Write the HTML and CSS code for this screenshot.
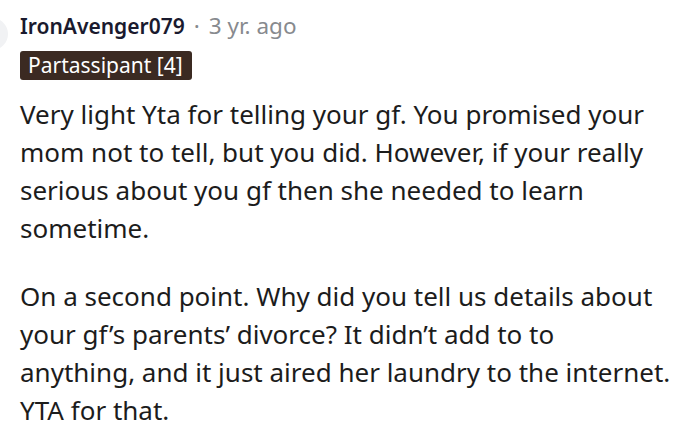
FILE: index.html
```html
<!DOCTYPE html>
<html>
<head>
<meta charset="utf-8">
<link rel="stylesheet" href="styles.css">
</head>
<body>
<div class="comment">
  <div class="avatar"></div>
  <div class="head">
    <span class="user">IronAvenger079</span>
    <span class="dot">·</span>
    <span class="time">3 yr. ago</span>
  </div>
  <div class="flair">Partassipant [4]</div>
  <div class="body">
    <p>Very light Yta for telling your gf. You promised your mom not to tell, but you did. However, if your really serious about you gf then she needed to learn sometime.</p>
    <p>On a second point. Why did you tell us details about your gf’s parents’ divorce? It didn’t add to to<br>anything, and it just aired her laundry to the internet. YTA for that.</p>
  </div>
</div>
</body>
</html>
```

FILE: styles.css
```css
html, body {
  margin: 0;
  padding: 0;
  background: #ffffff;
}
.comment {
  position: relative;
  padding: 12px 0 0 20px;
  font-family: "Noto Sans", sans-serif;
  width: 660px;
}
.avatar {
  position: absolute;
  left: -24px;
  top: 18px;
  width: 32px;
  height: 32px;
  border-radius: 50%;
  background: #f1f2f4;
}
.head {
  display: flex;
  align-items: baseline;
  gap: 9px;
  height: 28px;
  line-height: 28px;
}
.user {
  color: #1a1a2e;
  font-weight: 600;
  font-size: 21px;
}
.dot, .time {
  color: #878a8e;
  font-size: 22.5px;
}
.flair {
  display: inline-block;
  margin-top: 11px;
  background: #3b2a22;
  color: #ffffff;
  font-size: 21px;
  line-height: 29px;
  padding: 0 9px 0 8px;
  border-radius: 3px;
}
.body {
  color: #1c1c1c;
  font-size: 26px;
  line-height: 38px;
  margin-top: 15px;
}
.body p {
  margin: 0 0 30px 0;
}
.body p:last-child {
  margin-bottom: 0;
}
```
